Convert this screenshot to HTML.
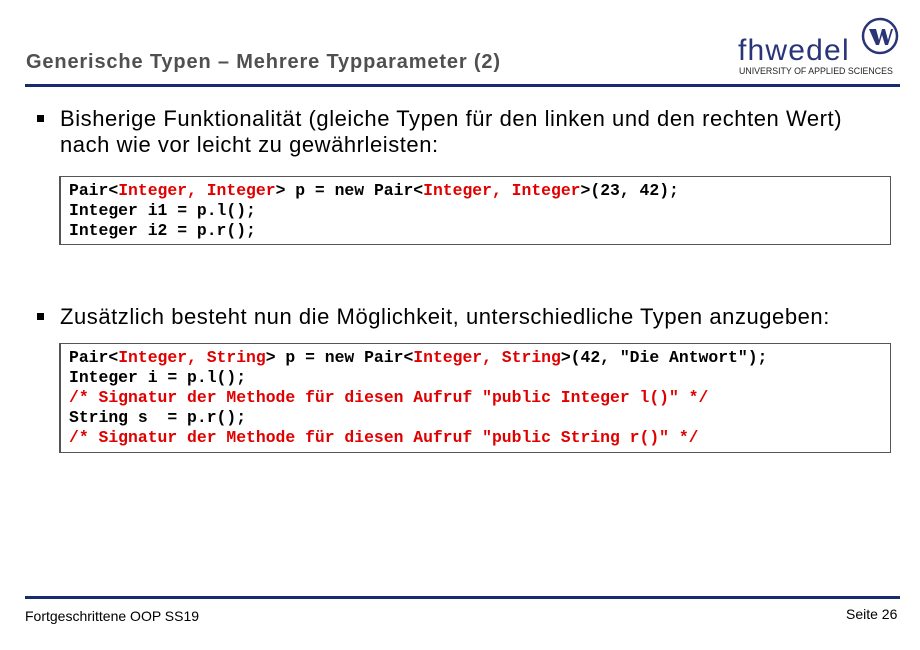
<!DOCTYPE html>
<html><head><meta charset="utf-8"><style>
body{margin:0;width:920px;height:650px;background:#fff;position:relative;overflow:hidden;font-family:"Liberation Sans",sans-serif}
.a{position:absolute;white-space:nowrap}
.title{left:26px;top:51px;font-size:20px;font-weight:bold;color:#505050;letter-spacing:0.85px}
.line{position:absolute;left:25px;width:875px;height:3px;background:#1a2a6e}
.b{font-size:22px;color:#000;letter-spacing:0.55px}
.sq{position:absolute;width:7px;height:7px;background:#000}
.box{position:absolute;left:59px;width:829px;border:1px solid #555;border-left:2px solid #555}
pre{margin:0;position:absolute;left:8px;font-family:"Liberation Mono",monospace;font-weight:bold;font-size:16.4px;line-height:20px;color:#000}
.r{color:#e00000}
</style></head><body>
<div class="a title">Generische Typen – Mehrere Typparameter (2)</div>
<div class="line" style="top:84px"></div>
<div class="a" style="left:738px;top:34px;font-size:30px;color:#2a3578;letter-spacing:1.2px">fhwedel</div>
<div class="a" style="left:739px;top:66px;font-size:8.8px;color:#222">UNIVERSITY OF APPLIED SCIENCES</div>
<svg class="a" style="left:861px;top:17px" width="38" height="38" viewBox="0 0 38 38"><circle cx="19" cy="19" r="17" fill="#fff" stroke="#2a3578" stroke-width="2.5"/><path d="M8 12h7l3 11 3-11h3l3 11 3-11h2l-5 16h-3l-3-10-3 10h-3z" fill="#2a3578"/></svg>
<div class="sq" style="left:37px;top:115px"></div>
<div class="a b" style="left:60px;top:106px">Bisherige Funktionalität (gleiche Typen für den linken und den rechten Wert)</div>
<div class="a b" style="left:60px;top:132px">nach wie vor leicht zu gewährleisten:</div>
<div class="box" style="top:176px;height:67px"><pre style="top:4px">Pair&lt;<span class="r">Integer, Integer</span>&gt; p = new Pair&lt;<span class="r">Integer, Integer</span>&gt;(23, 42);
Integer i1 = p.l();
Integer i2 = p.r();</pre></div>
<div class="sq" style="left:37px;top:313px"></div>
<div class="a b" style="left:60px;top:304px">Zusätzlich besteht nun die Möglichkeit, unterschiedliche Typen anzugeben:</div>
<div class="box" style="top:343px;height:108px"><pre style="top:4px">Pair&lt;<span class="r">Integer, String</span>&gt; p = new Pair&lt;<span class="r">Integer, String</span>&gt;(42, "Die Antwort");
Integer i = p.l();
<span class="r">/* Signatur der Methode für diesen Aufruf "public Integer l()" */</span>
String s  = p.r();
<span class="r">/* Signatur der Methode für diesen Aufruf "public String r()" */</span></pre></div>
<div class="line" style="top:596px"></div>
<div class="a" style="left:25px;top:608px;font-size:14px;color:#000">Fortgeschrittene OOP SS19</div>
<div class="a" style="left:846px;top:606px;font-size:14px;color:#000">Seite 26</div>
</body></html>
